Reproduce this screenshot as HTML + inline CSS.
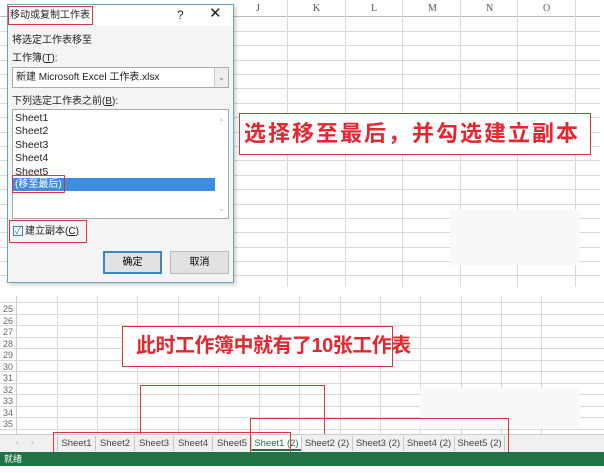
<!DOCTYPE html>
<html><head><meta charset="utf-8"><style>
*{margin:0;padding:0;box-sizing:border-box}
body{width:604px;height:473px;position:relative;background:#fff;font-family:"Liberation Sans","Noto Sans CJK SC",sans-serif;overflow:hidden}
.a{position:absolute}
.hl{position:absolute;height:1px;background:#dadada}
.vl{position:absolute;width:1px;background:#dadada}
.t{font-size:10px;color:#222;position:absolute;white-space:nowrap;line-height:12px}
.red{position:absolute;border:1.5px solid #d9363e}
.tab{position:absolute;top:436px;height:15px;font-size:9.5px;color:#444;text-align:center;line-height:15px;border-left:1px solid #c8c8c8}
</style></head><body>
<div class="a" style="left:0;top:0;width:604px;height:287px">
<div class="hl" style="left:0;top:16px;width:600px;background:#bbb"></div>
<div class="t" style="left:256px;top:3px;font-family:'Liberation Serif';color:#555">J</div>
<div class="t" style="left:313px;top:3px;font-family:'Liberation Serif';color:#555">K</div>
<div class="t" style="left:371px;top:3px;font-family:'Liberation Serif';color:#555">L</div>
<div class="t" style="left:428px;top:3px;font-family:'Liberation Serif';color:#555">M</div>
<div class="t" style="left:486px;top:3px;font-family:'Liberation Serif';color:#555">N</div>
<div class="t" style="left:543px;top:3px;font-family:'Liberation Serif';color:#555">O</div>
<div class="vl" style="left:287px;top:0;height:287px"></div>
<div class="vl" style="left:345px;top:0;height:287px"></div>
<div class="vl" style="left:402px;top:0;height:287px"></div>
<div class="vl" style="left:460px;top:0;height:287px"></div>
<div class="vl" style="left:517px;top:0;height:287px"></div>
<div class="vl" style="left:575px;top:0;height:287px"></div>
<div class="hl" style="left:0;top:31px;width:600px"></div>
<div class="hl" style="left:0;top:45px;width:600px"></div>
<div class="hl" style="left:0;top:60px;width:600px"></div>
<div class="hl" style="left:0;top:74px;width:600px"></div>
<div class="hl" style="left:0;top:88px;width:600px"></div>
<div class="hl" style="left:0;top:103px;width:600px"></div>
<div class="hl" style="left:0;top:117px;width:600px"></div>
<div class="hl" style="left:0;top:132px;width:600px"></div>
<div class="hl" style="left:0;top:146px;width:600px"></div>
<div class="hl" style="left:0;top:160px;width:600px"></div>
<div class="hl" style="left:0;top:175px;width:600px"></div>
<div class="hl" style="left:0;top:189px;width:600px"></div>
<div class="hl" style="left:0;top:204px;width:600px"></div>
<div class="hl" style="left:0;top:218px;width:600px"></div>
<div class="hl" style="left:0;top:232px;width:600px"></div>
<div class="hl" style="left:0;top:247px;width:600px"></div>
<div class="hl" style="left:0;top:261px;width:600px"></div>
<div class="hl" style="left:0;top:275px;width:600px"></div>
<div class="a" style="left:450px;top:210px;width:130px;height:55px;background:#f8f8f8"></div>
<div class="red" style="left:239px;top:113px;width:352px;height:42px;background:#fff"></div>
<div class="a" style="left:244px;top:120px;font-size:22px;line-height:28px;font-weight:bold;color:#e4262e;letter-spacing:2px;white-space:nowrap">选择移至最后，并勾选建立副本</div>
</div>
<div class="a" style="left:7px;top:4px;width:227px;height:279px;background:#f4f4f4;border:1px solid #6aa8b8;box-shadow:2px 2px 4px rgba(0,0,0,.2)">
<div class="a" style="left:0;top:0;width:225px;height:21px;background:#fff"></div>
<div class="red" style="left:0;top:1px;width:85px;height:19px;border-width:1px"></div>
<div class="t" style="left:2px;top:5px;font-size:10px">移动或复制工作表</div>
<div class="t" style="left:169px;top:4px;font-size:12px">?</div>
<div class="t" style="left:201px;top:3px;font-size:15px">✕</div>
<div class="t" style="left:4px;top:30px">将选定工作表移至</div>
<div class="t" style="left:4px;top:48px">工作簿(<u>T</u>):</div>
<div class="a" style="left:4px;top:62px;width:217px;height:21px;background:#fff;border:1px solid #aaa"></div>
<div class="t" style="left:8px;top:67px">新建 Microsoft Excel 工作表.xlsx</div>
<div class="a" style="left:206px;top:63px;width:14px;height:19px;background:#eee;border-left:1px solid #ccc;font-size:8px;color:#777;text-align:center;line-height:19px">⌄</div>
<div class="t" style="left:4px;top:91px">下列选定工作表之前(<u>B</u>):</div>
<div class="a" style="left:4px;top:104px;width:217px;height:110px;background:#fff;border:1px solid #aaa"></div>
<div class="t" style="left:7px;top:107px;font-size:10.5px">Sheet1</div>
<div class="t" style="left:7px;top:120px;font-size:10.5px">Sheet2</div>
<div class="t" style="left:7px;top:134px;font-size:10.5px">Sheet3</div>
<div class="t" style="left:7px;top:147px;font-size:10.5px">Sheet4</div>
<div class="t" style="left:7px;top:161px;font-size:10.5px">Sheet5</div>
<div class="a" style="left:5px;top:173px;width:202px;height:13px;background:#3d8ee3"></div>
<div class="t" style="left:7px;top:174px;color:#fff">(移至最后)</div>
<div class="red" style="left:4px;top:170px;width:53px;height:18px;border-width:1px"></div>
<div class="t" style="left:210px;top:112px;font-size:8px;color:#bbb">⌃</div>
<div class="t" style="left:210px;top:198px;font-size:8px;color:#bbb">⌄</div>
<div class="red" style="left:1px;top:215px;width:78px;height:23px;border-width:1px"></div>
<div class="a" style="left:5px;top:221px;width:10px;height:10px;border:1px solid #3a7fc4;background:#fff;font-size:9px;color:#2a6fb4;line-height:8px;text-align:center">✓</div>
<div class="t" style="left:17px;top:221px">建立副本(<u>C</u>)</div>
<div class="a" style="left:95px;top:246px;width:59px;height:23px;background:#e2e2e2;border:2px solid #3c86c6;font-size:10px;text-align:center;line-height:19px">确定</div>
<div class="a" style="left:162px;top:246px;width:59px;height:23px;background:#e2e2e2;border:1px solid #bbb;font-size:10px;text-align:center;line-height:21px">取消</div>
</div>
<div class="a" style="left:0;top:296px;width:604px;height:140px">
<div class="vl" style="left:16px;top:0;height:140px;background:#ccc"></div>
<div class="vl" style="left:57px;top:0;height:140px"></div>
<div class="vl" style="left:97px;top:0;height:140px"></div>
<div class="vl" style="left:137px;top:0;height:140px"></div>
<div class="vl" style="left:178px;top:0;height:140px"></div>
<div class="vl" style="left:218px;top:0;height:140px"></div>
<div class="vl" style="left:259px;top:0;height:140px"></div>
<div class="vl" style="left:299px;top:0;height:140px"></div>
<div class="vl" style="left:340px;top:0;height:140px"></div>
<div class="vl" style="left:380px;top:0;height:140px"></div>
<div class="vl" style="left:420px;top:0;height:140px"></div>
<div class="vl" style="left:461px;top:0;height:140px"></div>
<div class="vl" style="left:501px;top:0;height:140px"></div>
<div class="vl" style="left:541px;top:0;height:140px"></div>
<div class="hl" style="left:0;top:6px;width:604px"></div>
<div class="hl" style="left:0;top:18px;width:604px"></div>
<div class="hl" style="left:0;top:29px;width:604px"></div>
<div class="hl" style="left:0;top:41px;width:604px"></div>
<div class="hl" style="left:0;top:52px;width:604px"></div>
<div class="hl" style="left:0;top:64px;width:604px"></div>
<div class="hl" style="left:0;top:75px;width:604px"></div>
<div class="hl" style="left:0;top:87px;width:604px"></div>
<div class="hl" style="left:0;top:98px;width:604px"></div>
<div class="hl" style="left:0;top:110px;width:604px"></div>
<div class="hl" style="left:0;top:121px;width:604px"></div>
<div class="hl" style="left:0;top:133px;width:604px"></div>
<div class="t" style="left:3px;top:7px;font-size:9px;color:#666">25</div>
<div class="t" style="left:3px;top:19px;font-size:9px;color:#666">26</div>
<div class="t" style="left:3px;top:30px;font-size:9px;color:#666">27</div>
<div class="t" style="left:3px;top:42px;font-size:9px;color:#666">28</div>
<div class="t" style="left:3px;top:53px;font-size:9px;color:#666">29</div>
<div class="t" style="left:3px;top:65px;font-size:9px;color:#666">30</div>
<div class="t" style="left:3px;top:76px;font-size:9px;color:#666">31</div>
<div class="t" style="left:3px;top:88px;font-size:9px;color:#666">32</div>
<div class="t" style="left:3px;top:99px;font-size:9px;color:#666">33</div>
<div class="t" style="left:3px;top:111px;font-size:9px;color:#666">34</div>
<div class="t" style="left:3px;top:122px;font-size:9px;color:#666">35</div>
<div class="a" style="left:420px;top:92px;width:160px;height:40px;background:#f8f8f8"></div>
</div>
<div class="red" style="left:122px;top:326px;width:271px;height:41px;background:#fff"></div>
<div class="a" style="left:136px;top:333px;font-size:20px;line-height:26px;font-weight:bold;color:#e4262e;white-space:nowrap;letter-spacing:-0.5px">此时工作簿中就有了10张工作表</div>
<div class="a" style="left:140px;top:385px;width:185px;height:50px;border:1.5px solid #d9363e;border-bottom:none"></div>
<div class="a" style="left:0;top:434px;width:604px;height:18px;background:#f0f0f0;border-top:1px solid #ccc"></div>
<div class="t" style="left:16px;top:437px;font-size:8px;color:#aaa">‹</div>
<div class="t" style="left:31px;top:437px;font-size:8px;color:#aaa">›</div>
<div class="tab" style="left:57px;width:38px">Sheet1</div>
<div class="tab" style="left:95px;width:39px">Sheet2</div>
<div class="tab" style="left:134px;width:39px">Sheet3</div>
<div class="tab" style="left:173px;width:39px">Sheet4</div>
<div class="tab" style="left:212px;width:39px">Sheet5</div>
<div class="tab" style="left:251px;width:50px;background:#fff;color:#217346;border-bottom:2px solid #217346">Sheet1 (2)</div>
<div class="tab" style="left:301px;width:51px">Sheet2 (2)</div>
<div class="tab" style="left:352px;width:51px">Sheet3 (2)</div>
<div class="tab" style="left:403px;width:51px">Sheet4 (2)</div>
<div class="tab" style="left:454px;width:51px;border-right:1px solid #c8c8c8">Sheet5 (2)</div>
<div class="red" style="left:53px;top:432px;width:238px;height:22px"></div>
<div class="red" style="left:250px;top:418px;width:259px;height:37px"></div>
<div class="a" style="left:0;top:452px;width:604px;height:14px;background:#217346"></div>
<div class="t" style="left:4px;top:453px;font-size:9px;color:#fff">就绪</div>
</body></html>
